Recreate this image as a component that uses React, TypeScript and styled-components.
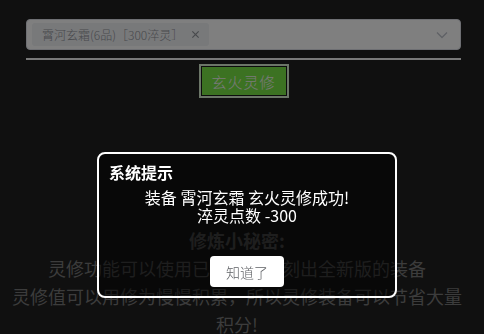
import React from "react";
import styled, { createGlobalStyle } from "styled-components";

const GlobalStyle = createGlobalStyle`
  html, body { margin: 0; padding: 0; }
  body {
    background: #202020;
    font-family: "Noto Sans CJK SC", "Noto Sans", sans-serif;
    width: 484px;
    height: 334px;
    overflow: hidden;
  }
`;

const Page = styled.div`
  padding: 19px 0 0 26px;
  width: 435px;
  display: flex;
  flex-direction: column;
  align-items: center;
`;

const SelectWrap = styled.div`
  width: 100%;
  padding-bottom: 8px;
  border-bottom: 2px solid #f2f2f2;
`;

const Select = styled.div`
  box-sizing: border-box;
  height: 31px;
  background: #fff;
  border: 1px solid #dcdfe6;
  border-radius: 4px;
  display: flex;
  align-items: center;
  padding: 0 12px 0 5px;
`;

const Tag = styled.span`
  display: inline-flex;
  align-items: center;
  gap: 8px;
  height: 23px;
  padding: 0 9px 0 10px;
  background: #f0f2f5;
  border-radius: 3px;
  color: #909399;
  font-size: 12px;
  font-weight: 300;
  white-space: nowrap;
`;

const Spacer = styled.div`
  flex: 1;
`;

const ActionButton = styled.button`
  margin-top: 6px;
  width: 86px;
  height: 30px;
  box-sizing: border-box;
  background: #78e444;
  border: 1px solid #1a1a1a;
  box-shadow: 0 0 0 2px #d8ecd0;
  color: #f4f4f4;
  font-family: "Noto Sans CJK SC", sans-serif;
  font-size: 15px;
  font-weight: 300;
  letter-spacing: 1px;
  padding: 0;
`;

const Tips = styled.div`
  margin-top: 130px;
  width: 473px;
  margin-left: -26px;
  padding-left: 13px;
  box-sizing: border-box;
  text-align: center;
  color: #787878;
  font-size: 18px;
  line-height: 28px;
`;

const TipTitle = styled.div`
  font-weight: bold;
`;

const Mask = styled.div`
  position: fixed;
  inset: 0;
  background: rgba(0, 0, 0, 0.5);
`;

const Dialog = styled.div`
  position: fixed;
  left: 97px;
  top: 152px;
  width: 300px;
  height: 146px;
  box-sizing: border-box;
  background: rgba(0, 0, 0, 0.5);
  border: 2px solid #fff;
  border-radius: 8px;
  padding: 8px 10px 0;
  display: flex;
  flex-direction: column;
  color: #fff;
`;

const DialogTitle = styled.div`
  font-size: 16px;
  font-weight: bold;
  line-height: 20px;
`;

const DialogMessage = styled.div`
  margin-top: 6px;
  text-align: center;
  font-size: 16px;
  line-height: 18px;
  white-space: pre;
`;

const OkButton = styled.button`
  align-self: center;
  margin-top: 32px;
  width: 74px;
  height: 31px;
  background: #fff;
  border: none;
  border-radius: 4px;
  color: #606266;
  font-family: "Noto Sans CJK SC", sans-serif;
  font-size: 14px;
  font-weight: 300;
  padding: 0;
`;

const CloseIcon = () => (
  <svg width="9" height="9" viewBox="0 0 10 10">
    <path d="M1.5 1.5 L8.5 8.5 M8.5 1.5 L1.5 8.5" stroke="#909399" strokeWidth="1.3" fill="none" />
  </svg>
);

const Chevron = () => (
  <svg width="12" height="8" viewBox="0 0 12 8">
    <path d="M1 1.5 L6 6.5 L11 1.5" stroke="#c0c4cc" strokeWidth="1.4" fill="none" />
  </svg>
);

export default function App() {
  return (
    <>
      <GlobalStyle />
      <Page>
        <SelectWrap>
          <Select>
            <Tag>
              霄河玄霜(6品)［300淬灵］
              <CloseIcon />
            </Tag>
            <Spacer />
            <Chevron />
          </Select>
        </SelectWrap>
        <ActionButton>玄火灵修</ActionButton>
        <Tips>
          <TipTitle>修炼小秘密:</TipTitle>
          <div>灵修功能可以使用已有装备复刻出全新版的装备</div>
          <div>灵修值可以用修为慢慢积累，所以灵修装备可以节省大量积分!</div>
        </Tips>
      </Page>
      <Mask />
      <Dialog>
        <DialogTitle>系统提示</DialogTitle>
        <DialogMessage>{"装备 霄河玄霜 玄火灵修成功!\n淬灵点数 -300"}</DialogMessage>
        <OkButton>知道了</OkButton>
      </Dialog>
    </>
  );
}
